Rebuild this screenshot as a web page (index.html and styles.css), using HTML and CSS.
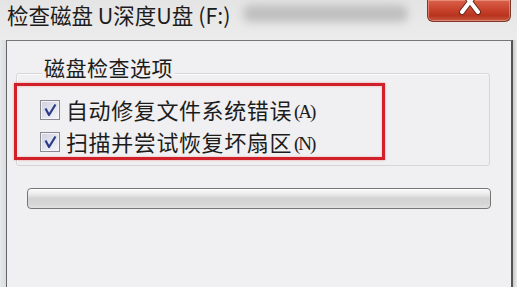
FILE: index.html
```html
<!DOCTYPE html>
<html lang="zh-CN">
<head>
<meta charset="utf-8">
<title>检查磁盘 U深度U盘 (F:)</title>
<link rel="stylesheet" href="styles.css">
</head>
<body>
<div class="titlebar">
  <div class="title">检查磁盘 U深度U盘 (F:)</div>
  <div class="blur"></div>
  <div class="close">
    <svg width="84" height="22" viewBox="0 0 84 22">
      <path d="M35 -9 L51 12 M51 -9 L35 12" stroke="#6b2a20" stroke-width="6" stroke-linecap="round"/>
      <path d="M35 -9 L51 12 M51 -9 L35 12" stroke="#ffffff" stroke-width="4" stroke-linecap="round"/>
    </svg>
  </div>
</div>
<div class="window">
  <div class="frame-left"></div>
  <div class="client">
    <div class="groupbox">
      <div class="legend">磁盘检查选项</div>
      <div class="rows">
        <div class="row">
          <span class="check"><svg width="18" height="18" viewBox="0 0 18 18"><path d="M4.5 7.5 L8 14 L14.5 3.5" fill="none" stroke="#2c3b86" stroke-width="2.2" stroke-linejoin="round"/></svg></span>
          <span class="label">自动修复文件系统错误<span class="key">(A)</span></span>
        </div>
        <div class="row">
          <span class="check"><svg width="18" height="18" viewBox="0 0 18 18"><path d="M4.5 7.5 L8 14 L14.5 3.5" fill="none" stroke="#2c3b86" stroke-width="2.2" stroke-linejoin="round"/></svg></span>
          <span class="label">扫描并尝试恢复坏扇区<span class="key">(N)</span></span>
        </div>
      </div>
    </div>
    <div class="progress"></div>
    <div class="highlight"></div>
  </div>
  <div class="frame-right"></div>
</div>
</body>
</html>
```
FILE: styles.css
```css
html, body {
  margin: 0;
  padding: 0;
}
body {
  width: 517px;
  height: 287px;
  overflow: hidden;
  background: #e9e9e9;
  font-family: "Noto Sans CJK SC", "Noto Sans", sans-serif;
  color: #1c1c1c;
}
.titlebar {
  height: 40px;
  display: flex;
  align-items: flex-start;
  background: linear-gradient(to bottom, #e4e4e4, #ececec);
}
.title {
  margin-left: 7px;
  margin-top: 1px;
  font-size: 21.5px;
  line-height: 27px;
  white-space: nowrap;
}
.blur {
  margin-left: 12px;
  margin-top: 5px;
  width: 165px;
  height: 17px;
  background: #bfbfbf;
  border-radius: 8px;
  filter: blur(4px);
}
.close {
  margin-left: auto;
  margin-right: 6px;
  width: 84px;
  height: 22px;
  box-sizing: border-box;
  border: 1px solid #7d3a2c;
  border-top: none;
  border-radius: 0 0 6px 6px;
  background: linear-gradient(to bottom, #d9624c 0%, #c9432c 45%, #b8341e 75%, #c75a44 100%);
  box-shadow: inset 0 0 0 1px rgba(255, 190, 170, 0.45);
  overflow: hidden;
}
.close svg {
  display: block;
  margin-left: -1px;
}
.window {
  display: flex;
  height: 247px;
}
.frame-left {
  width: 6px;
  background: linear-gradient(to right, #e6e8ea, #d9dcdf);
}
.client {
  position: relative;
  flex: 1;
  background: #f0eff1;
  border-top: 1px solid #777;
  border-left: 1px solid #666;
  border-right: 2px solid #555;
}
.frame-right {
  width: 4px;
  background: linear-gradient(to right, #c8c8c8, #ececec);
}
.groupbox {
  margin-left: 9px;
  margin-top: 32px;
  width: 474px;
  height: 93px;
  box-sizing: border-box;
  border: 1px solid #d6d6d6;
  border-radius: 3px;
  box-shadow: inset 1px 1px 0 #fbfbfb;
}
.legend {
  display: block;
  width: max-content;
  margin-left: 25px;
  margin-top: -17px;
  padding: 0 2px;
  background: #f0eff1;
  font-size: 21px;
  line-height: 21px;
  letter-spacing: 0.5px;
}
.rows {
  margin-top: 16px;
  padding-left: 23px;
}
.row {
  display: flex;
  align-items: center;
  height: 32px;
}
.check {
  width: 20px;
  height: 20px;
  box-sizing: border-box;
  border: 1px solid #8a8b90;
  background: linear-gradient(135deg, #cfd1df 0%, #e6e7ef 60%, #f6f6f9 100%);
  box-shadow: inset 0 0 0 1px #f4f4f6;
  display: flex;
  align-items: center;
  justify-content: center;
}
.check svg {
  display: block;
}
.label {
  margin-left: 6px;
  font-size: 22px;
  line-height: 26px;
  letter-spacing: 0.6px;
  white-space: nowrap;
}
.key {
  margin-left: 2px;
  font-family: "Liberation Serif", serif;
  font-size: 19px;
  letter-spacing: -2px;
  vertical-align: 1px;
}
.progress {
  margin-left: 20px;
  margin-top: 22px;
  width: 464px;
  height: 21px;
  box-sizing: border-box;
  border: 1px solid #767676;
  border-radius: 4px;
  background: linear-gradient(to bottom, #fafafa 0%, #ececec 25%, #d3d3d3 50%, #d6d6d6 80%, #e2e2e2 100%);
  box-shadow: inset 0 1px 0 #ffffff;
}
.highlight {
  position: absolute;
  left: 7px;
  top: 42px;
  width: 371px;
  height: 77px;
  box-sizing: border-box;
  border: 3px solid #d0202a;
  box-shadow: 0 0 2px rgba(235, 90, 90, 0.6), inset 0 0 2px rgba(235, 90, 90, 0.5);
}
```
